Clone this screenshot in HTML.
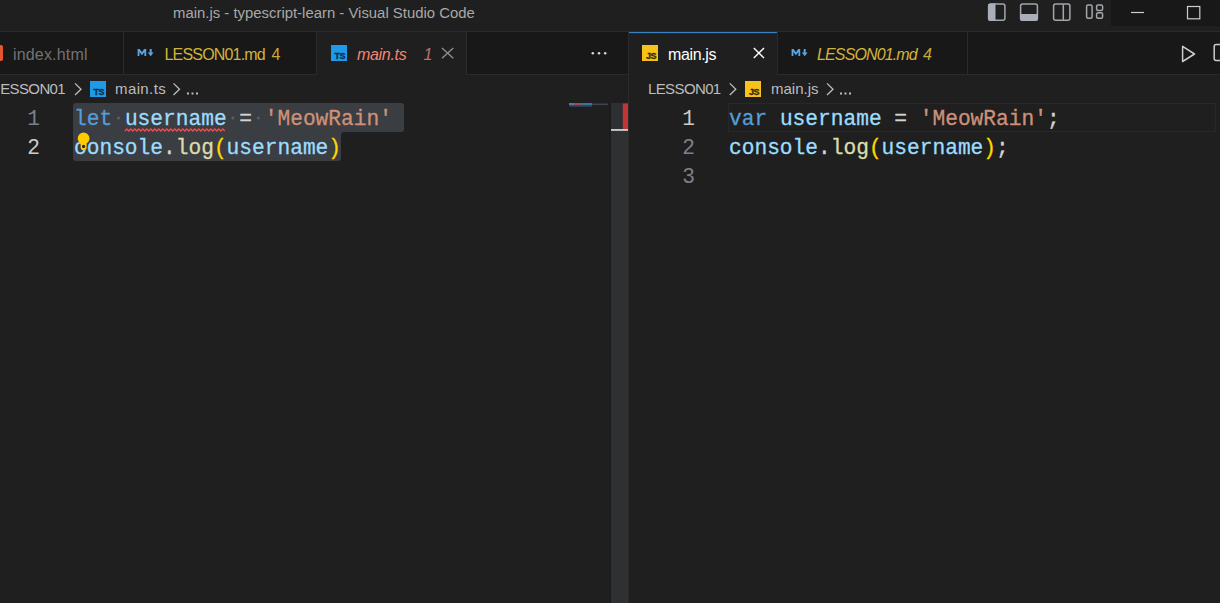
<!DOCTYPE html>
<html><head><meta charset="utf-8">
<style>
*{margin:0;padding:0;box-sizing:border-box}
html,body{width:1220px;height:603px;overflow:hidden;background:#1f1f1f;font-family:"Liberation Sans",sans-serif}
.abs{position:absolute}
svg{position:absolute;overflow:visible}
#title{left:0;top:0;width:1220px;height:31px;background:#1f1f1f}
#titleborder{left:0;top:31px;width:1220px;height:1px;background:#2b2b2b}
#winctl{left:1111px;top:0;width:109px;height:26px;background:#181818}
#titletext{left:173px;top:2.5px;font-size:14.9px;color:#a8a8a8;white-space:nowrap;line-height:20px}
#tabbar{left:0;top:32px;width:1220px;height:42px;background:#181818}
#tabborder{left:0;top:74px;width:1220px;height:1px;background:#2b2b2b}
.sep{width:1px;background:#2b2b2b}
.tabtxt{font-size:16px;white-space:nowrap;line-height:20px;top:44.8px}
.crumb{font-size:15px;white-space:nowrap;line-height:20px;color:#bdbdbd;top:79px}
.code{font-family:"Liberation Mono",monospace;font-size:21.2px;line-height:29px;white-space:pre;letter-spacing:0px;-webkit-text-stroke:0.3px currentColor}
.ln{font-family:"Liberation Mono",monospace;font-size:21.2px;line-height:29px;text-align:right;width:40px}
.ico{width:16px;height:16px}
.ts{background:#1e9be8}
.js{background:#f7c31b}
.icotxt{position:absolute;right:2px;bottom:1.5px;font-family:"Liberation Sans",sans-serif;font-weight:bold;font-size:9px;line-height:8px;letter-spacing:-0.5px;-webkit-text-stroke:0.35px currentColor}
.sel{background:#3a3d41}
</style></head><body>
<div id="title" class="abs"></div>
<div id="winctl" class="abs"></div>
<div id="titleborder" class="abs"></div>
<div id="titletext" class="abs">main.js - typescript-learn - Visual Studio Code</div>

<!-- layout icons -->
<svg style="left:0;top:0" width="1220" height="31">
  <g fill="none" stroke="#a3a6ab" stroke-width="1.5" transform="translate(0,-0.6)">
    <rect x="988.6" y="4.6" width="16.3" height="16.3" rx="2"/>
    <rect x="1020.6" y="4.6" width="16.8" height="16.3" rx="2"/>
    <rect x="1053.6" y="4.6" width="16.3" height="16.3" rx="2"/>
    <line x1="1063.3" y1="5" x2="1063.3" y2="20.5"/>
    <rect x="1086.6" y="5.6" width="5.5" height="13.3" rx="1.5"/>
    <rect x="1096.6" y="5.6" width="6" height="5.5" rx="1.5"/>
    <rect x="1096.6" y="13.3" width="6" height="5.5" rx="1.5"/>
  </g>
  <g fill="#a9afb8" transform="translate(0,-0.6)">
    <path d="M988 6.5 a2.5 2.5 0 0 1 2.5 -2.5 H995.5 V21.5 H990.5 a2.5 2.5 0 0 1 -2.5 -2.5 Z"/>
    <path d="M1020 14.5 H1038 V19 a2.5 2.5 0 0 1 -2.5 2.5 H1022.5 a2.5 2.5 0 0 1 -2.5 -2.5 Z"/>
  </g>
  <g stroke="#cfcfcf" stroke-width="1.2" fill="none">
    <line x1="1131" y1="12.5" x2="1144" y2="12.5"/>
    <rect x="1187.5" y="6.5" width="12.3" height="12.3"/>
  </g>
</svg>

<div id="tabbar" class="abs"></div>
<div id="tabborder" class="abs"></div>

<!-- left group tabs -->
<div class="abs sep" style="left:123px;top:32px;height:42px"></div>
<div class="abs sep" style="left:316px;top:32px;height:42px"></div>
<div class="abs" style="left:317px;top:32px;width:149px;height:43px;background:#1f1f1f"></div>
<div class="abs sep" style="left:466px;top:32px;height:42px"></div>
<div class="abs" style="left:629px;top:32px;width:148px;height:43px;background:#1f1f1f;border-top:1px solid #3a82c4"></div>
<div class="abs" style="left:629px;top:33px;width:147px;height:1px;background:#10304e"></div>
<div class="abs sep" style="left:628px;top:32px;height:571px"></div>

<div class="abs" style="left:-13.5px;top:44.5px;width:16px;height:16px;background:#e4572e;border-radius:2px"></div>
<div class="abs tabtxt" style="left:13px;color:#727272;letter-spacing:0.17px">index.html</div>

<svg style="left:0;top:0" width="1220" height="75">
  <g fill="#55a6e8">
    <path d="M137.6 56 V49 H139.6 L141.9 52.3 L144.2 49 H146.2 V56 H144.4 V52 L141.9 55.2 L139.4 52 V56 Z"/>
    <path d="M149.7 49 H151.7 V52.6 H153.6 L150.7 56.2 L147.8 52.6 H149.7 Z"/>
    <path d="M791.6 56 V49 H793.6 L795.9 52.3 L798.2 49 H800.2 V56 H798.4 V52 L795.9 55.2 L793.4 52 V56 Z"/>
    <path d="M803.7 49 H805.7 V52.6 H807.6 L804.7 56.2 L801.8 52.6 H803.7 Z"/>
  </g>
  <g stroke="#8e8e8e" stroke-width="1.4">
    <line x1="442" y1="48" x2="453.3" y2="58.3"/><line x1="453.3" y1="48" x2="442" y2="58.3"/>
  </g>
  <g stroke="#ffffff" stroke-width="1.4">
    <line x1="753.8" y1="48" x2="764" y2="58.1"/><line x1="764" y1="48" x2="753.8" y2="58.1"/>
  </g>
  <g fill="#d8d8d8">
    <circle cx="592.8" cy="53.2" r="1.25"/><circle cx="599" cy="53.2" r="1.25"/><circle cx="605.2" cy="53.2" r="1.25"/>
  </g>
  <g fill="none" stroke="#cccccc" stroke-width="1.5" stroke-linejoin="round">
    <path d="M1182.6 46.3 L1194.5 54 L1182.6 61.5 Z"/>
    <rect x="1214.2" y="44.6" width="14" height="16" rx="2"/>
  </g>
</svg>
<div class="abs ico ts" style="left:331px;top:45px"><span class="icotxt" style="color:#0b2e4f">TS</span></div>
<div class="abs ico js" style="left:642px;top:45px"><span class="icotxt" style="color:#3a2a05">JS</span></div>

<div class="abs tabtxt" style="left:164.5px;color:#d2b43a;letter-spacing:-0.82px">LESSON01.md</div>
<div class="abs tabtxt" style="left:271.5px;color:#c9a93a">4</div>
<div class="abs tabtxt" style="left:357px;color:#f48771;font-style:italic;letter-spacing:-0.31px">main.ts</div>
<div class="abs tabtxt" style="left:423.5px;color:#b9726a;font-style:italic">1</div>

<!-- right group tabs -->
<div class="abs sep" style="left:777px;top:32px;height:42px"></div>
<div class="abs sep" style="left:967px;top:32px;height:42px"></div>
<div class="abs tabtxt" style="left:668px;color:#ffffff;letter-spacing:-0.37px">main.js</div>
<div class="abs tabtxt" style="left:817px;color:#d2b43a;font-style:italic;letter-spacing:-0.87px">LESSON01.md</div>
<div class="abs tabtxt" style="left:923px;color:#c9a93a;font-style:italic">4</div>

<!-- breadcrumbs -->
<div class="abs crumb" style="left:0.2px;letter-spacing:-0.62px">ESSON01</div>
<div class="abs crumb" style="left:115px;letter-spacing:0.4px">main.ts</div>
<div class="abs crumb" style="left:648px;letter-spacing:-0.62px">LESSON01</div>
<div class="abs crumb" style="left:771px">main.js</div>
<svg style="left:0;top:0" width="1220" height="103">
  <g fill="none" stroke="#bdbdbd" stroke-width="1.3">
    <path d="M75 83.4 L81 89.2 L75 95"/>
    <path d="M173.5 83.4 L179.5 89.2 L173.5 95"/>
    <path d="M729.8 83.4 L735.8 89.2 L729.8 95"/>
    <path d="M827 83.4 L833 89.2 L827 95"/>
  </g>
  <g fill="#bdbdbd">
    <rect x="187" y="92.5" width="2" height="2"/><rect x="191.5" y="92.5" width="2" height="2"/><rect x="196" y="92.5" width="2" height="2"/>
    <rect x="840" y="92.5" width="2" height="2"/><rect x="844.5" y="92.5" width="2" height="2"/><rect x="849" y="92.5" width="2" height="2"/>
  </g>
</svg>
<div class="abs ico ts" style="left:90px;top:81px"><span class="icotxt" style="color:#0b2e4f">TS</span></div>
<div class="abs ico js" style="left:745px;top:81px"><span class="icotxt" style="color:#3a2a05">JS</span></div>

<!-- left editor -->
<div class="abs sel" style="left:73px;top:103px;width:331px;height:29px;border-radius:3px 3px 3px 0"></div>
<div class="abs sel" style="left:73px;top:132px;width:268px;height:29px;border-radius:0 0 3px 3px"></div>
<div class="abs sel" style="left:341px;top:132px;width:4px;height:4px"></div>
<div class="abs" style="left:341px;top:132px;width:10px;height:10px;background:#1f1f1f;border-top-left-radius:3.5px"></div>
<svg style="left:0;top:0" width="628" height="603">
  <g fill="#5c5f63">
    <circle cx="118.5" cy="118" r="1.5"/><circle cx="232.8" cy="118" r="1.5"/><circle cx="258.3" cy="118" r="1.5"/>
  </g>
  <path d="M124.8 131 l2 -2 l2 2 l2 -2 l2 2 l2 -2 l2 2 l2 -2 l2 2 l2 -2 l2 2 l2 -2 l2 2 l2 -2 l2 2 l2 -2 l2 2 l2 -2 l2 2 l2 -2 l2 2 l2 -2 l2 2 l2 -2 l2 2 l2 -2 l2 2 l2 -2 l2 2 l2 -2 l2 2 l2 -2 l2 2 l2 -2 l2 2 l2 -2 l2 2 l2 -2 l2 2 l2 -2 l2 2 l2 -2 l2 2 l2 -2 l2 2 l2 -2 l2 2 l2 -2 l2 2 l2 -2 l2 2" fill="none" stroke="#f14c4c" stroke-width="1.3"/>
  <!-- minimap -->
  <rect x="569" y="103" width="5" height="2.5" fill="#4a7aa6"/>
  <rect x="574" y="103" width="8" height="2.5" fill="#9a4a5e"/>
  <rect x="582" y="103" width="10" height="2.5" fill="#43709c"/>
  <rect x="592" y="103.5" width="16" height="1.5" fill="#3f4650"/>
  <rect x="570" y="105.5" width="22" height="1.2" fill="#2f4a63"/>
  <!-- scrollbar -->
  <rect x="611" y="103" width="17" height="500" fill="#2f3032"/>
  <rect x="611" y="103.5" width="11.5" height="26" fill="#2d2f32"/>
  <rect x="622.8" y="103.5" width="5.2" height="26" fill="#c33434"/>
  <rect x="611" y="129" width="17" height="1.9" fill="#c8c8c8"/>
  <rect x="609.5" y="103" width="1.5" height="500" fill="#1b1c1e"/>
</svg>
<div class="abs ln" style="left:0px;top:105px;color:#7b8189">1</div>
<div class="abs ln" style="left:0px;top:134px;color:#cccccc">2</div>
<div class="abs code" style="left:74px;top:105px"><span style="color:#569cd6">let</span> <span style="color:#9cdcfe">username</span> <span style="color:#d4d4d4">=</span> <span style="color:#ce9178">'MeowRain'</span></div>
<div class="abs code" style="left:74px;top:134px"><span style="color:#9cdcfe">console</span><span style="color:#d4d4d4">.</span><span style="color:#dcdcaa">log</span><span style="color:#ffd700">(</span><span style="color:#9cdcfe">username</span><span style="color:#ffd700">)</span></div>
<svg style="left:0;top:0" width="628" height="603">
  <path d="M83.6 132.6 A5.9 5.9 0 0 1 89.5 138.5 C89.5 140.8 88 142.3 86.6 143.5 V147.2 A3 3 0 0 1 80.6 147.2 V143.5 C79.2 142.3 77.7 140.8 77.7 138.5 A5.9 5.9 0 0 1 83.6 132.6 Z" fill="#ffcc00"/>
  <circle cx="83.6" cy="146.4" r="1.6" fill="#2a2520"/>
</svg>

<!-- right editor -->
<div class="abs" style="left:728px;top:103px;width:488px;height:29px;border:1px solid #282828"></div>
<div class="abs ln" style="left:655px;top:105px;color:#cccccc">1</div>
<div class="abs ln" style="left:655px;top:134px;color:#7b8189">2</div>
<div class="abs ln" style="left:655px;top:163px;color:#7b8189">3</div>
<div class="abs code" style="left:729px;top:105px"><span style="color:#569cd6">var</span> <span style="color:#9cdcfe">username</span> <span style="color:#d4d4d4">=</span> <span style="color:#ce9178">'MeowRain'</span><span style="color:#d4d4d4">;</span></div>
<div class="abs code" style="left:729px;top:134px"><span style="color:#9cdcfe">console</span><span style="color:#d4d4d4">.</span><span style="color:#dcdcaa">log</span><span style="color:#ffd700">(</span><span style="color:#9cdcfe">username</span><span style="color:#ffd700">)</span><span style="color:#d4d4d4">;</span></div>
</body></html>
